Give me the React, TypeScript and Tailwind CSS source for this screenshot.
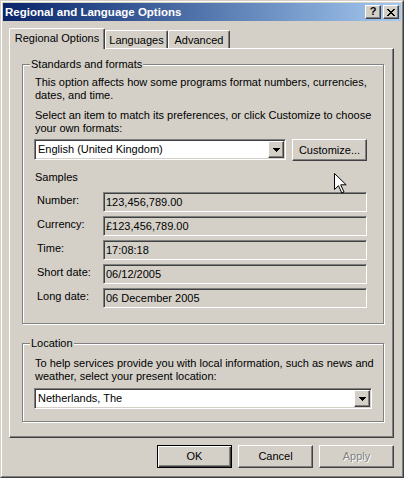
import type { ReactNode } from 'react';

// classic 3D edges
const raised =
  'border border-t-white border-l-white border-r-[#404040] border-b-[#404040] shadow-[inset_-1px_-1px_0_#808080]';
const sunken =
  'border border-t-[#808080] border-l-[#808080] border-r-white border-b-white shadow-[inset_1px_1px_0_#404040,inset_-1px_-1px_0_#d4d0c8]';

function DropArrow() {
  return (
    <svg width="7" height="4" viewBox="0 0 7 4" shapeRendering="crispEdges">
      <path d="M0 0h7v1H0zM1 1h5v1H1zM2 2h3v1H2zM3 3h1v1H3z" fill="#000" />
    </svg>
  );
}

function ComboBox({ value, className }: { value: string; className: string }) {
  return (
    <div className={`flex h-[21px] items-center bg-white p-[1px] ${sunken} ${className}`}>
      <span className="flex-1 whitespace-nowrap pl-[2px]">{value}</span>
      <div className={`flex h-[17px] w-[16px] items-center justify-center bg-[#d4d0c8] ${raised}`}>
        <DropArrow />
      </div>
    </div>
  );
}

function PushButton({
  children,
  isDefault,
  disabled,
  className = 'h-[23px]',
}: {
  children: ReactNode;
  isDefault?: boolean;
  disabled?: boolean;
  className?: string;
}) {
  return (
    <div
      className={`flex w-[75px] items-center justify-center bg-[#d4d0c8] ${className} ${
        isDefault
          ? 'border border-black shadow-[inset_1px_1px_0_#fff,inset_-1px_-1px_0_#404040,inset_-2px_-2px_0_#808080]'
          : raised
      } ${disabled ? 'text-[#808080] [text-shadow:1px_1px_0_#fff]' : ''}`}
    >
      {children}
    </div>
  );
}

function GroupBox({
  title,
  className,
  children,
}: {
  title: string;
  className: string;
  children: ReactNode;
}) {
  return (
    <fieldset
      className={`w-[362px] border border-[#808080] p-0 shadow-[1px_1px_0_#fff,inset_1px_1px_0_#fff] ${className}`}
    >
      <legend className="ml-[7px] bg-[#d4d0c8] px-[1px] leading-[13px]">{title}</legend>
      {children}
    </fieldset>
  );
}

const samples = [
  { label: 'Number:', value: '123,456,789.00' },
  { label: 'Currency:', value: '£123,456,789.00' },
  { label: 'Time:', value: '17:08:18' },
  { label: 'Short date:', value: '06/12/2005' },
  { label: 'Long date:', value: '06 December 2005' },
];

export default function App() {
  return (
    <div className="relative h-[478px] w-[404px] border border-t-[#d4d0c8] border-l-[#d4d0c8] border-r-[#404040] border-b-[#404040] bg-[#d4d0c8] font-['Liberation_Sans',Arial,sans-serif] text-[11px] leading-[13px] text-black">
      <div className="flex h-full flex-col border border-t-white border-l-white border-r-[#808080] border-b-[#808080] p-[1px]">
        {/* title bar */}
        <div className="flex h-[18px] items-center bg-gradient-to-r from-[#0a246a] to-[#a6caf0] pl-[2px] pr-[2px]">
          <span className="flex-1 whitespace-nowrap text-[11.5px] font-bold text-white">
            Regional and Language Options
          </span>
          <div className="flex gap-[2px]">
            <div className={`flex h-[14px] w-[16px] items-center justify-center bg-[#d4d0c8] pb-[1px] text-[11px] font-bold leading-none ${raised}`}>
              ?
            </div>
            <div className={`flex h-[14px] w-[16px] items-center justify-center bg-[#d4d0c8] ${raised}`}>
              <svg width="8" height="7" viewBox="0 0 8 7" shapeRendering="crispEdges">
                <path
                  d="M0 0h2v1H0zM6 0h2v1H6zM1 1h2v1H1zM5 1h2v1H5zM2 2h4v1H2zM3 3h2v1H3zM2 4h4v1H2zM1 5h2v1H1zM5 5h2v1H5zM0 6h2v1H0zM6 6h2v1H6z"
                  fill="#000"
                />
              </svg>
            </div>
          </div>
        </div>

        <div className="pl-[6px] pt-[7px]">
          {/* tabs */}
          <div className="flex h-[20px] items-end">
            <div className="relative z-10 -mb-[1px] flex h-[21px] w-[96px] justify-center rounded-t-[2px] border-t border-l border-r border-t-white border-l-white border-r-[#404040] bg-[#d4d0c8] pt-[3px] shadow-[inset_-1px_0_0_#808080]">
              Regional Options
            </div>
            <div className="flex h-[18px] w-[63px] justify-center rounded-t-[2px] border-t border-l border-r border-t-white border-l-white border-r-[#404040] pt-[3px] shadow-[inset_-1px_0_0_#808080]">
              Languages
            </div>
            <div className="flex h-[18px] w-[62px] justify-center rounded-t-[2px] border-t border-l border-r border-t-white border-l-white border-r-[#404040] pt-[3px] shadow-[inset_-1px_0_0_#808080]">
              Advanced
            </div>
          </div>

          {/* tab page */}
          <div className={`h-[390px] w-[385px] pl-[12px] pt-[9px] ${raised}`}>
            <GroupBox title="Standards and formats" className="">
              <div className="pb-[15px] pl-[11px] pt-[5px]">
                <p className="whitespace-nowrap pl-[1px]">
                  This option affects how some programs format numbers, currencies,
                  <br />
                  dates, and time.
                </p>
                <p className="mt-[7px] whitespace-nowrap pl-[1px]">
                  Select an item to match its preferences, or click Customize to choose
                  <br />
                  your own formats:
                </p>
                <div className="mt-[4px] flex items-start gap-[6px]">
                  <ComboBox value="English (United Kingdom)" className="w-[252px]" />
                  <PushButton className="h-[22px]">Customize...</PushButton>
                </div>
                <p className="mt-[10px] pl-[1px]">Samples</p>
                <div className="mt-[8px] flex flex-col gap-[4px]">
                  {samples.map((s) => (
                    <div key={s.label} className="flex items-start">
                      <span className="mt-[2px] w-[69px] pl-[3px]">{s.label}</span>
                      <div className={`flex h-[20px] w-[264px] items-center pl-[2px] ${sunken}`}>
                        {s.value}
                      </div>
                    </div>
                  ))}
                </div>
              </div>
            </GroupBox>

            <GroupBox title="Location" className="mt-[13px]">
              <div className="pb-[12px] pl-[11px] pt-[7px]">
                <p className="whitespace-nowrap pl-[1px]">
                  To help services provide you with local information, such as news and
                  <br />
                  weather, select your present location:
                </p>
                <ComboBox value="Netherlands, The" className="mt-[5px] w-[338px]" />
              </div>
            </GroupBox>
          </div>

          {/* dialog buttons */}
          <div className="mt-[7px] flex w-[385px] justify-end gap-[6px]">
            <PushButton isDefault>OK</PushButton>
            <PushButton>Cancel</PushButton>
            <PushButton disabled>Apply</PushButton>
          </div>
        </div>
      </div>

      {/* mouse pointer */}
      <svg
        className="absolute left-[333px] top-[172px]"
        width="13"
        height="21"
        viewBox="0 0 13 21"
      >
        <path
          d="M0.5 0.5v16l4-3.8 3.3 7.3 2.2-1-3.3-7.2h5.5z"
          fill="#fff"
          stroke="#000"
          strokeWidth="1"
          strokeLinejoin="miter"
        />
      </svg>
    </div>
  );
}
